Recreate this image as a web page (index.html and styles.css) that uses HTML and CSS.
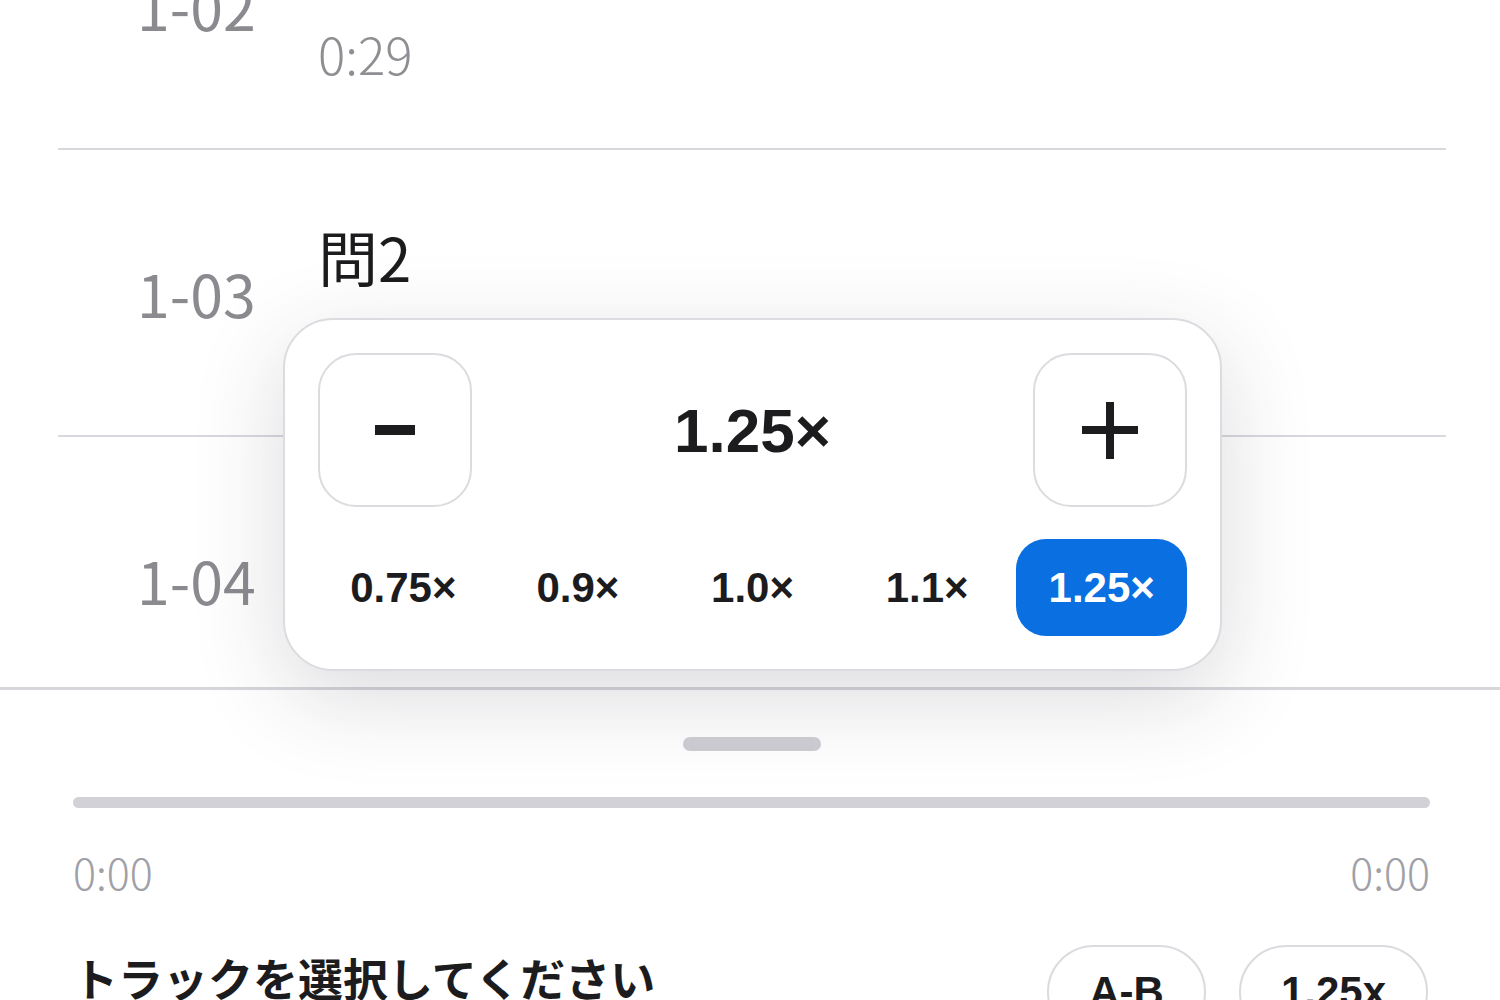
FILE: index.html
```html
<!DOCTYPE html>
<html lang="ja">
<head>
    <meta charset="UTF-8">
    <meta name="viewport" content="width=device-width, initial-scale=1.0">
    <title>プレイヤー</title>
    <link rel="stylesheet" href="styles.css">
</head>
<body>
    <div class="list-wrap">
        <div class="track-list">
            <div class="track">
                <div class="track-no">1-02</div>
                <div class="track-info">
                    <div class="track-title">問1</div>
                    <div class="track-time">0:29</div>
                </div>
            </div>
            <div class="track">
                <div class="track-no">1-03</div>
                <div class="track-info">
                    <div class="track-title">問2</div>
                    <div class="track-time">0:31</div>
                </div>
            </div>
            <div class="track">
                <div class="track-no">1-04</div>
                <div class="track-info">
                    <div class="track-title">問3</div>
                    <div class="track-time">0:27</div>
                </div>
            </div>
        </div>
    </div>

    <div class="sheet">
        <div class="handle"></div>
        <div class="progress"></div>
        <div class="times">
            <span>0:00</span>
            <span>0:00</span>
        </div>
        <div class="now-row">
            <div class="now-title">トラックを選択してください</div>
            <div class="pills">
                <button class="pill">A-B</button>
                <button class="pill">1.25x</button>
            </div>
        </div>
    </div>

    <!-- speed popup -->
    <div class="speed-pop">
        <div class="speed-top">
            <button class="step-btn" aria-label="遅く">
                <svg width="40" height="10" viewBox="0 0 40 10"><rect x="0" y="0" width="40" height="10" fill="#1c1c1e"/></svg>
            </button>
            <div class="speed-value">1.25×</div>
            <button class="step-btn" aria-label="速く">
                <svg width="56" height="57" viewBox="0 0 56 57"><rect x="24" y="0" width="8" height="57" fill="#1c1c1e"/><rect x="0" y="24" width="56" height="8" fill="#1c1c1e"/></svg>
            </button>
        </div>
        <div class="speed-chips">
            <button class="chip">0.75×</button>
            <button class="chip">0.9×</button>
            <button class="chip">1.0×</button>
            <button class="chip">1.1×</button>
            <button class="chip active">1.25×</button>
        </div>
    </div>
</body>
</html>
```

FILE: styles.css
```css
body {
    margin: 0;
    height: 1000px;
    overflow: hidden;
    background-color: #ffffff;
    font-family: "Noto Sans CJK JP", "Noto Sans", sans-serif;
    display: flex;
    flex-direction: column;
}

button {
    font-family: "Liberation Sans", Arial, sans-serif;
    background: #ffffff;
    color: #1c1c1e;
    cursor: pointer;
}

/* track list (scrolled) */
.list-wrap {
    height: 687px;
    overflow: hidden;
    flex-shrink: 0;
}

.track-list {
    margin-top: -137px;
    padding: 0 54px 0 58px;
}

.track {
    display: flex;
    align-items: center;
    height: 285px;
    padding-left: 79px;
    border-bottom: 2px solid #d9d8dd;
}

.track-no {
    width: 181px;
    font-size: 59px;
    color: #8a8a8f;
}

.track-info {
    padding-top: 4px;
}

.track-title {
    font-size: 60px;
    line-height: 72px;
    color: #1c1c1e;
}

.track-time {
    margin-top: 18px;
    font-size: 51px;
    font-weight: 300;
    line-height: 60px;
    color: #8e8e93;
}

/* bottom sheet */
.sheet {
    flex: 1;
    border-top: 3px solid #d7d6db;
    padding: 47px 70px 0 73px;
    background-color: #ffffff;
}

.handle {
    width: 138px;
    height: 14px;
    margin: 0 auto;
    border-radius: 7px;
    background-color: #cfced4;
}

.progress {
    height: 11px;
    margin-top: 46px;
    border-radius: 6px;
    background-color: #d2d1d8;
}

.times {
    display: flex;
    justify-content: space-between;
    margin-top: 36px;
    font-size: 43px;
    font-weight: 300;
    line-height: 55px;
    color: #a0a0a6;
}

.now-row {
    display: flex;
    justify-content: space-between;
    align-items: flex-start;
    margin-top: 46px;
}

.now-title {
    margin-top: 6px;
    font-size: 45px;
    font-weight: 600;
    line-height: 54px;
    color: #1c1c1e;
}

.pills {
    display: flex;
    gap: 33px;
    margin-right: 2px;
}

.pill {
    border: 2px solid #dadadf;
    border-radius: 50px;
    padding: 21px 40px;
    font-size: 42px;
    font-weight: 700;
    line-height: 48px;
}

/* speed popup */
.speed-pop {
    position: absolute;
    left: 283px;
    top: 318px;
    width: 869px;
    padding: 33px;
    border: 2px solid #dcdce0;
    border-radius: 50px;
    background-color: #ffffff;
    box-shadow: 0 26px 90px rgba(40, 40, 60, 0.17);
}

.speed-top {
    display: flex;
    justify-content: space-between;
    align-items: center;
}

.step-btn {
    width: 154px;
    height: 154px;
    border: 2px solid #dcdce0;
    border-radius: 38px;
    display: flex;
    align-items: center;
    justify-content: center;
    padding: 0;
}

.speed-value {
    font-family: "Liberation Sans", Arial, sans-serif;
    font-size: 62px;
    font-weight: 700;
    color: #1c1c1e;
}

.speed-chips {
    display: grid;
    grid-template-columns: repeat(5, 1fr);
    gap: 4px;
    margin-top: 32px;
}

.chip {
    height: 97px;
    border: none;
    border-radius: 30px;
    font-size: 42px;
    font-weight: 700;
    padding: 0;
}

.chip.active {
    background-color: #0a6fe0;
    color: #ffffff;
}
```
